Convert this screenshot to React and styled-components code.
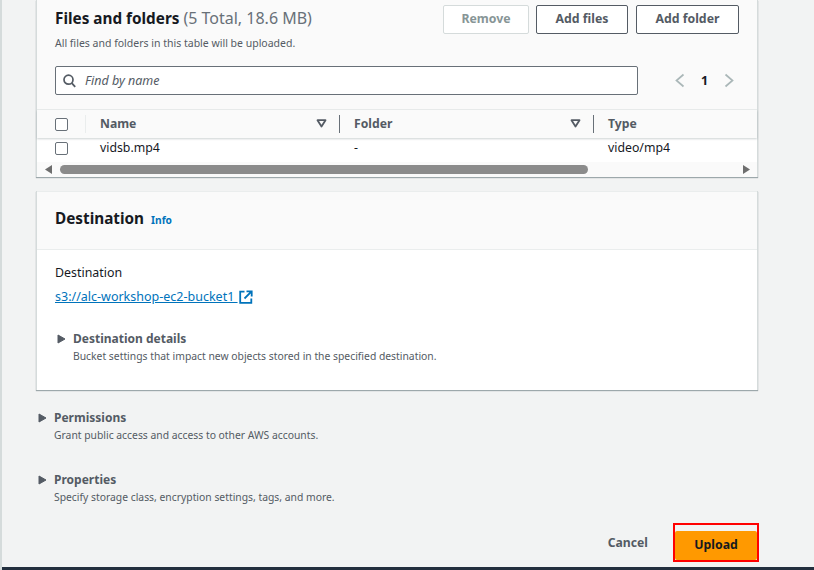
import React from "react";
import styled, { createGlobalStyle } from "styled-components";

const Global = createGlobalStyle`
  html, body { margin: 0; padding: 0; overflow: hidden; background: #f2f3f3; }
  * { box-sizing: border-box; }
`;
const Page = styled.div`
  width: 814px; height: 570px; overflow: hidden; display: flex; flex-direction: column;
  font-family: "Noto Sans", "Open Sans", sans-serif; font-size: 13px; color: #16191f;
  background: #f2f3f3; border-left: 2px solid #d5dbdb;
`;
const Main = styled.div`
  flex: 1; display: flex; flex-direction: column; padding-left: 34px; width: 756px; min-height: 0;
`;
const Footer = styled.div`height: 3px; background: #232f3e; margin-left: -2px;`;
const Card = styled.section`
  background: #fff; border-left: 1px solid #d5dbdb; border-right: 1px solid #d5dbdb;
  box-shadow: 0 1px 1px 0 rgba(0,28,36,.35); display: flex; flex-direction: column;
`;
const FilesCard = styled(Card)`height: 177px;`;
const FilesTop = styled.div`
  height: 110px; background: #fafafa; border-bottom: 1px solid #eaeded; padding: 5px 18px 0 18px;
  display: flex; flex-direction: column;
`;
const TitleRow = styled.div`display: flex; justify-content: space-between; align-items: flex-start;`;
const H2 = styled.h2`
  margin: 0; font-size: 15.3px; line-height: 24px; font-weight: 700; color: #16191f;
  span { font-weight: 400; font-size: 16px; color: #687078; }
`;
const FilesTitle = styled(H2)`margin-top: 1px;`;
const Buttons = styled.div`display: flex; gap: 8px;`;
const Button = styled.button`
  height: 29px; width: ${p => p.$w}px; background: #fff; border-radius: 2px; padding: 0 0 3px;
  border: 1px solid ${p => p.disabled ? "#d5dbdb" : "#545b64"};
  color: ${p => p.disabled ? "#879596" : "#545b64"};
  font: 700 12.3px "Noto Sans", sans-serif;
  &:first-child { margin-right: -1px; }
`;
const Sub = styled.div`font-size: 10.5px; line-height: 14px; color: #545b64; margin-top: 2px;`;
const SearchRow = styled.div`display: flex; align-items: center; margin-top: 16px;`;
const Search = styled.div`
  width: 583px; height: 29px; background: #fff; border: 1px solid #687078; border-radius: 2px;
  display: flex; align-items: center; gap: 9px; padding-left: 7px;
  color: #545b64; font-style: italic; font-size: 12.5px;
`;
const Pager = styled.div`
  display: flex; align-items: center; margin-left: 36px; gap: 15px; font-weight: 700; font-size: 12.5px;
`;
const HeadRow = styled.div`
  height: 28px; background: #fafafa; display: flex; align-items: center;
  box-shadow: 0 1px 2px rgba(0,28,36,.2); z-index: 1; color: #545b64; font-weight: 700; font-size: 12.2px;
`;
const Check = styled.span`
  width: 13px; height: 13px; border: 1px solid #687078; border-radius: 2px; background: #fff; display: block; flex: none;
`;
const CheckCell = styled.div`
  width: 49px; padding-left: 18px; display: flex; align-items: center; height: 18px;
  ${p => p.$head && "border-right: 1px solid #eaeded;"}
`;
const Col = styled.div`
  width: ${p => p.$w}px; height: 18px; display: flex; align-items: center; justify-content: space-between;
  padding: 0 12px 1px 14px; ${p => p.$line && "border-right: 1px solid #687078;"}
`;
const BodyRow = styled.div`
  height: 24px; display: flex; align-items: center; padding-bottom: 4px; color: #16191f; font-size: 12.3px;
`;
const Scrollbar = styled.div`
  flex: 1; background: #fafafa; display: flex; align-items: center; padding: 0 7px 0 8px;
`;
const Thumb = styled.div`height: 9px; width: 528px; background: #8b8b8b; border-radius: 5px; margin-left: 7px; margin-right: auto;`;
const DestCard = styled(Card)`height: 199px; margin-top: 14px;`;
const DestHead = styled.div`
  height: 59px; background: #fafafa; border-bottom: 1px solid #eaeded; border-top: 1px solid #eaeded;
  padding: 14px 18px 0; display: flex; align-items: baseline; gap: 7px;
`;
const Info = styled.a`color: #0073bb; font-size: 10.2px; font-weight: 700;`;
const DestBody = styled.div`padding: 14px 18px 0;`;
const Label = styled.div`font-size: 12.4px; line-height: 18px;`;
const LinkRow = styled.div`display: flex; align-items: center; gap: 1px; margin-top: 6px; line-height: 18px;`;
const Link = styled.a`color: #0073bb; text-decoration: underline; font-size: 12.5px; white-space: pre;`;
const Expand = styled.div`
  display: flex; gap: 7px; margin-top: ${p => p.$top}px; margin-left: 2px; align-items: flex-start;
`;
const ExpandTitle = styled.div`font-weight: 700; font-size: 12px; line-height: 17px; color: #545b64;`;
const ExpandSub = styled.div`font-size: 10.35px; line-height: 14px; color: #545b64; margin-top: 2px;`;
const Actions = styled.div`display: flex; align-items: center; justify-content: flex-end; margin-top: 19px; gap: 25px;`;
const Cancel = styled.span`font-weight: 700; font-size: 12.2px; color: #545b64;`;
const Upload = styled.div`
  width: 86px; height: 39px; border: 2px solid #f00; padding-top: 6px; background: #f2f3f3; margin-right: -1px; flex: none;
`;
const UploadInner = styled.button`
  width: 100%; height: 29px; background: #ff9900; border: 0; border-radius: 2px; color: #16191f; padding: 0 0 2px;
  font: 700 12.3px "Noto Sans", sans-serif; display: block;
`;

const Sort = () => (
  <svg width="11" height="9" viewBox="0 0 11 9"><path d="M1.5 1.2h8L5.5 7.6z" fill="none" stroke="#545b64" strokeWidth="1.8" strokeLinejoin="round" /></svg>
);
const CaretIcon = styled.svg`flex: none; margin-top: 4px;`;
const Caret = () => (
  <CaretIcon width="9" height="10" viewBox="0 0 9 10"><path d="M1 1l7 4-7 4z" fill="#545b64" stroke="#545b64" strokeLinejoin="round" /></CaretIcon>
);
const Chevron = ({ flip }) => (
  <svg width="12" height="15" viewBox="0 0 12 15"><path d={flip ? "M2.5 1.5l7 6-7 6" : "M9.5 1.5l-7 6 7 6"} fill="none" stroke="#aab7b8" strokeWidth="1.7" /></svg>
);
const Arrow = ({ right }) => (
  <svg width="8" height="9" viewBox="0 0 8 9"><path d={right ? "M1 0v9l7-4.5z" : "M7 0v9L0 4.5z"} fill="#6e6e6e" /></svg>
);

export default function App() {
  return (
    <Page>
      <Global />
      <Main>
        <FilesCard>
          <FilesTop>
            <TitleRow>
              <FilesTitle>Files and folders <span>(5 Total, 18.6 MB)</span></FilesTitle>
              <Buttons>
                <Button disabled $w={86}>Remove</Button>
                <Button $w={92}>Add files</Button>
                <Button $w={103}>Add folder</Button>
              </Buttons>
            </TitleRow>
            <Sub>All files and folders in this table will be uploaded.</Sub>
            <SearchRow>
              <Search>
                <svg width="13" height="14" viewBox="0 0 13 14"><circle cx="5.5" cy="5.7" r="4.5" fill="none" stroke="#545b64" strokeWidth="1.7" /><path d="M8.8 9.2l3.4 3.6" stroke="#545b64" strokeWidth="1.8" /></svg>
                Find by name
              </Search>
              <Pager><Chevron /><span>1</span><Chevron flip /></Pager>
            </SearchRow>
          </FilesTop>
          <HeadRow>
            <CheckCell $head><Check /></CheckCell>
            <Col $w={254} $line>Name<Sort /></Col>
            <Col $w={254} $line>Folder<Sort /></Col>
            <Col $w={150}>Type</Col>
          </HeadRow>
          <BodyRow>
            <CheckCell><Check /></CheckCell>
            <Col $w={254}>vidsb.mp4</Col>
            <Col $w={254}>-</Col>
            <Col $w={150}>video/mp4</Col>
          </BodyRow>
          <Scrollbar>
            <Arrow />
            <Thumb />
            <Arrow right />
          </Scrollbar>
        </FilesCard>
        <DestCard>
          <DestHead>
            <H2>Destination</H2>
            <Info>Info</Info>
          </DestHead>
          <DestBody>
            <Label>Destination</Label>
            <LinkRow>
              <Link>s3://alc-workshop-ec2-bucket1 </Link>
              <svg width="14" height="14" viewBox="0 0 14 14"><path d="M5.5 1.7H1.2v11.1h11.1V8.5" fill="none" stroke="#0073bb" strokeWidth="1.8" /><path d="M7.5 1.3h5.2v5.2M12.3 1.7L5.5 8.5" fill="none" stroke="#0073bb" strokeWidth="1.8" /></svg>
            </LinkRow>
            <Expand $top={24}>
              <Caret />
              <div>
                <ExpandTitle>Destination details</ExpandTitle>
                <ExpandSub>Bucket settings that impact new objects stored in the specified destination.</ExpandSub>
              </div>
            </Expand>
          </DestBody>
        </DestCard>
        <Expand $top={19}>
          <Caret />
          <div>
            <ExpandTitle>Permissions</ExpandTitle>
            <ExpandSub>Grant public access and access to other AWS accounts.</ExpandSub>
          </div>
        </Expand>
        <Expand $top={29}>
          <Caret />
          <div>
            <ExpandTitle>Properties</ExpandTitle>
            <ExpandSub>Specify storage class, encryption settings, tags, and more.</ExpandSub>
          </div>
        </Expand>
        <Actions>
          <Cancel>Cancel</Cancel>
          <Upload><UploadInner>Upload</UploadInner></Upload>
        </Actions>
      </Main>
      <Footer />
    </Page>
  );
}
